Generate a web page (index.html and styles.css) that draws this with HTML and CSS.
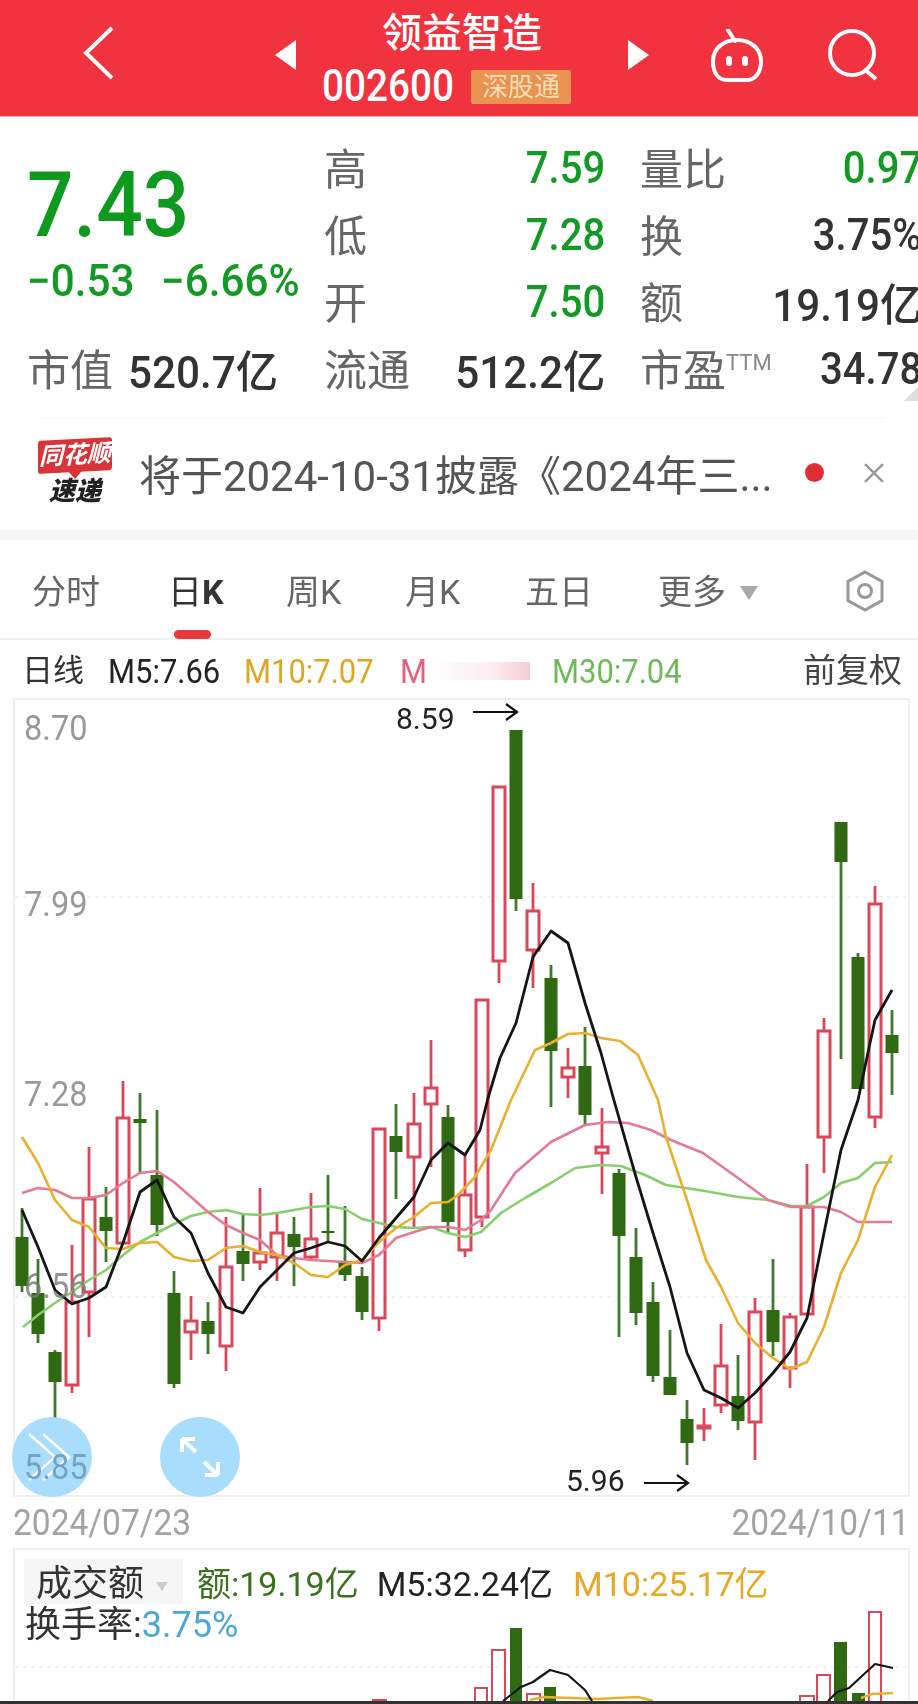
FILE: index.html
```html
<!DOCTYPE html>
<html lang="zh-CN">
<head>
    <meta charset="UTF-8">
    <meta name="viewport" content="width=device-width, initial-scale=1.0">
    <title>领益智造 002600</title>
    <link rel="stylesheet" href="styles.css">
</head>
<body>
    <div class="page">
        <header class="top-bar">
            <svg class="back" width="32" height="54" viewBox="0 0 32 54"><path d="M29 2 L3 27 L29 52" fill="none" stroke="#fff" stroke-width="4"/></svg>
            <svg class="tri-left" width="21" height="30" viewBox="0 0 21 30"><path d="M21 0 V30 L0 15 Z" fill="#fff"/></svg>
            <div class="stock-name">
                <div class="stock-title">领益智造</div>
                <div class="stock-code">
                    <span class="code-num">002600</span>
                    <span class="badge">深股通</span>
                </div>
            </div>
            <svg class="tri-right" width="21" height="30" viewBox="0 0 21 30"><path d="M0 0 V30 L21 15 Z" fill="#fff"/></svg>
            <svg class="robot" width="54" height="54" viewBox="0 0 54 54">
                <path d="M18 1 L25 12" fill="none" stroke="#fff" stroke-width="4" stroke-linecap="round"/>
                <path d="M27 11 C40 11 51 19 51 32 C51 45 44 51 37 51 H17 C9 51 3 45 3 32 C3 19 14 11 27 11 Z" fill="none" stroke="#fff" stroke-width="4"/>
                <rect x="16" y="27" width="6" height="10" rx="3" fill="#fff"/>
                <rect x="32" y="27" width="6" height="10" rx="3" fill="#fff"/>
            </svg>
            <svg class="search" width="52" height="52" viewBox="0 0 52 52">
                <circle cx="25" cy="24" r="22" fill="none" stroke="#fff" stroke-width="4"/>
                <path d="M37 40 L49 50" fill="none" stroke="#fff" stroke-width="4"/>
            </svg>
        </header>

        <section class="quote">
            <div class="price-block">
                <div class="price">7.43</div>
                <div class="change"><span>−0.53</span><span>−6.66%</span></div>
            </div>
            <div class="stat col-mid"><span class="stat-label">高</span><span class="num fall">7.59</span></div>
            <div class="stat"><span class="stat-label">量比</span><span class="num fall">0.97</span></div>
            <div class="stat col-mid"><span class="stat-label">低</span><span class="num fall">7.28</span></div>
            <div class="stat"><span class="stat-label">换</span><span class="num">3.75%</span></div>
            <div class="stat col-mid"><span class="stat-label">开</span><span class="num fall">7.50</span></div>
            <div class="stat"><span class="stat-label">额</span><span class="num num-wide">19.19亿</span></div>
            <div class="stat stat-cap"><span class="stat-label">市值</span><span class="num num-wide">520.7亿</span></div>
            <div class="stat col-mid"><span class="stat-label">流通</span><span class="num num-wide">512.2亿</span></div>
            <div class="stat"><span class="stat-label">市盈<sup class="ttm">TTM</sup></span><span class="num">34.78</span></div>
            <div class="corner"></div>
        </section>

        <div class="notice-wrap">
            <div class="notice">
                <div class="notice-logo">
                    <div class="logo-top">同花顺</div>
                    <div class="logo-bottom">速递</div>
                </div>
                <div class="notice-text">将于2024-10-31披露《2024年三...</div>
                <div class="notice-dot"></div>
                <svg class="notice-close" width="22" height="22" viewBox="0 0 22 22"><path d="M2 2 L20 20 M20 2 L2 20" stroke="#999" stroke-width="2.5"/></svg>
            </div>
        </div>

        <div class="band"></div>

        <nav class="tabs">
            <span class="tab tab-1">分时</span>
            <span class="tab tab-2 active">日<b>K</b></span>
            <span class="tab tab-3">周K</span>
            <span class="tab tab-4">月K</span>
            <span class="tab tab-5">五日</span>
            <span class="tab tab-6">更多<i class="more-tri"></i></span>
            <svg class="hex" width="42" height="42" viewBox="0 0 42 42">
                <path d="M21 2 L38 11.5 V30.5 L21 40 L4 30.5 V11.5 Z" fill="none" stroke="#999" stroke-width="3"/>
                <circle cx="21" cy="21" r="6.5" fill="none" stroke="#999" stroke-width="3"/>
            </svg>
        </nav>

        <div class="legend">
            <span class="legend-name">日线</span>
            <span class="ma l-m5">M5:7.66</span>
            <span class="ma l-m10">M10:7.07</span>
            <span class="ma l-m20">M</span>
            <span class="smudge"></span>
            <span class="ma l-m30">M30:7.04</span>
            <span class="legend-right">前复权</span>
        </div>

        <section class="chart-box">
            <canvas id="klineCanvas" width="893" height="795"></canvas>
            <span class="axis-label y1">8.70</span>
            <span class="axis-label y2">7.99</span>
            <span class="axis-label y3">7.28</span>
            <span class="axis-label y4">6.56</span>
            <div class="round-btn btn-a">
                <svg width="50" height="50" viewBox="0 0 50 50"><path d="M2 2 L28 25 L2 48 M16 2 L42 25 L16 48" fill="none" stroke="#fff" stroke-width="2.5"/></svg>
            </div>
            <div class="round-btn btn-b">
                <svg width="46" height="46" viewBox="0 0 46 46"><path d="M5 5 L19 18 M5 5 H18 M5 5 V18 M41 41 L27 28 M41 41 H28 M41 41 V28" fill="none" stroke="#fff" stroke-width="4"/></svg>
            </div>
            <span class="axis-label y5">5.85</span>
            <span class="mark mark-high">8.59</span>
            <svg class="mark-arrow arrow-high" width="46" height="18" viewBox="0 0 46 18"><path d="M0 9 H44 M33 1 L44 9 L33 17" fill="none" stroke="#111" stroke-width="2.2"/></svg>
            <span class="mark mark-low">5.96</span>
            <svg class="mark-arrow arrow-low" width="46" height="18" viewBox="0 0 46 18"><path d="M0 9 H44 M33 1 L44 9 L33 17" fill="none" stroke="#111" stroke-width="2.2"/></svg>
        </section>

        <div class="dates"><span class="date-from">2024/07/23</span><span class="date-to">2024/10/11</span></div>

        <section class="volume-box">
            <canvas id="volumeCanvas" width="893" height="151"></canvas>
            <div class="vol-head">
                <div class="vol-select">成交额<i class="select-tri"></i></div>
                <span class="v-amount">额:19.19亿</span>
                <span class="v-m5">M5:32.24亿</span>
                <span class="v-m10">M10:25.17亿</span>
            </div>
            <div class="vol-rate">换手率:<span>3.75%</span></div>
        </section>

        <div class="bottom-strip"></div>
    </div>

    <script src="chart.js"></script>
</body>
</html>
```

FILE: styles.css
```css
* {
    margin: 0;
    padding: 0;
    box-sizing: border-box;
}

html, body {
    width: 918px;
    height: 1704px;
    overflow: hidden;
    background: #fff;
}

.page {
    width: 918px;
    height: 1704px;
    overflow: hidden;
    font-family: Roboto, 'Noto Sans CJK SC', sans-serif;
    color: #333;
    filter: blur(0.6px);
}

/* top bar */
.top-bar {
    height: 117px;
    background: #f1323f;
    display: flex;
    align-items: flex-start;
    color: #fff;
    border-bottom: 1px solid #e8b0b0;
}

.back {
    margin: 26px 0 0 83px;
}

.tri-left {
    margin: 40px 0 0 160px;
}

.tri-right {
    margin: 40px 0 0 0;
}

.robot {
    margin: 29px 0 0 61px;
}

.search {
    margin: 29px 0 0 63px;
}

.stock-name {
    width: 332px;
    padding-left: 26px;
}

.stock-title {
    width: 280px;
    padding-top: 9px;
    height: 64px;
    font-size: 40px;
    font-weight: 500;
    line-height: 50px;
    text-align: center;
}

.stock-code {
    position: relative;
    height: 40px;
}

.code-num {
    display: inline-block;
    font-size: 44px;
    font-weight: 500;
    line-height: 44px;
    transform: scaleX(0.88);
    transform-origin: left center;
}

.badge {
    position: absolute;
    left: 149px;
    top: 6px;
    width: 100px;
    height: 34px;
    line-height: 34px;
    background: #e8934f;
    color: #f8dcb8;
    font-size: 26px;
    text-align: center;
    border-radius: 2px;
}

/* quote */
.quote {
    position: relative;
    width: 925px;
    padding: 15px 0 0 27px;
    display: grid;
    grid-template-columns: 297px 316px 282px;
    grid-template-rows: repeat(4, 67px);
    font-size: 44px;
    font-weight: 500;
    color: #333;
}

.price-block {
    grid-row: 1 / span 3;
}

.price {
    font-size: 91px;
    line-height: 100px;
    margin-top: 23px;
    color: #0e9a1e;
    font-weight: 500;
    transform: scaleX(0.9);
    transform-origin: left center;
}

.change {
    display: flex;
    gap: 22px;
    margin-top: 3px;
    font-size: 44px;
    line-height: 46px;
    color: #139a25;
    font-weight: 500;
}

.change span {
    display: inline-block;
    transform: scaleX(0.96);
    transform-origin: left center;
}

.stat {
    display: flex;
    justify-content: space-between;
    align-items: center;
}

.col-mid {
    padding-right: 35px;
}

.stat-cap {
    justify-content: flex-start;
    gap: 15px;
}

.num {
    display: inline-block;
    transform: translateY(2px) scaleX(0.91);
    transform-origin: right center;
    white-space: nowrap;
}

.num-wide {
    transform: translateY(2px) scaleX(0.96);
}

.stat-cap .num {
    transform-origin: left center;
}

.stat-label {
    font-size: 43px;
    font-weight: 400;
    color: #666;
}

.fall {
    color: #139a25;
}

.ttm {
    font-size: 22px;
    color: #888;
    vertical-align: 16px;
    line-height: 0;
}

.corner {
    position: absolute;
    right: 7px;
    bottom: -1px;
    width: 0;
    height: 0;
    border-left: 14px solid transparent;
    border-bottom: 14px solid #ddd;
}

/* notice */
.notice-wrap {
    height: 130px;
    padding: 17px 33px 0 40px;
}

.notice {
    border-top: 1px solid #f2f2f2;
    height: 110px;
    display: flex;
    align-items: center;
}

.notice-logo {
    width: 74px;
    margin-left: -2px;
    text-align: center;
}

.logo-top {
    height: 33px;
    line-height: 32px;
    background: #d9333a;
    color: #fff;
    font-size: 24px;
    font-style: italic;
    font-weight: 700;
    border-radius: 3px;
    transform: skewY(-3deg);
    position: relative;
}

.logo-top::after {
    content: "";
    position: absolute;
    left: 30px;
    bottom: -7px;
    border-left: 7px solid transparent;
    border-right: 7px solid transparent;
    border-top: 8px solid #d9333a;
}

.logo-bottom {
    font-size: 26px;
    line-height: 30px;
    margin-top: 4px;
    font-style: italic;
    font-weight: 900;
    color: #222;
}

.notice-text {
    width: 650px;
    margin-left: 27px;
    font-size: 42px;
    color: #555;
    white-space: nowrap;
}

.notice-dot {
    width: 19px;
    height: 19px;
    border-radius: 50%;
    background: #e22d35;
    margin-left: 17px;
}

.notice-close {
    margin-left: 39px;
}

.band {
    height: 10px;
    background: #f6f6f6;
}

/* tabs */
.tabs {
    position: relative;
    height: 100px;
    display: flex;
    align-items: center;
    font-size: 34px;
    color: #666;
    border-bottom: 2px solid #f1f1f1;
}

.tab {
    position: absolute;
    white-space: nowrap;
}

.tab-1 { left: 32px; }
.tab-2 { left: 168px; color: #333; }
.tab-3 { left: 286px; }
.tab-4 { left: 405px; }
.tab-5 { left: 525px; }
.tab-6 { left: 658px; }

.active b {
    font-weight: 700;
}

.active::after {
    content: "";
    position: absolute;
    left: 6px;
    top: 65px;
    width: 37px;
    height: 9px;
    border-radius: 5px;
    background: #e8383b;
}

.more-tri {
    display: inline-block;
    margin-left: 14px;
    vertical-align: 4px;
    border-left: 9px solid transparent;
    border-right: 9px solid transparent;
    border-top: 14px solid #aaa;
}

.hex {
    position: absolute;
    left: 844px;
    top: 30px;
}

/* legend */
.legend {
    position: relative;
    height: 58px;
    font-size: 34px;
    line-height: 62px;
    white-space: nowrap;
}

.legend span {
    position: absolute;
    top: 0;
}

.ma {
    transform: scaleX(0.91);
    transform-origin: left center;
}

.legend-name { left: 22px; font-size: 31px; }
.l-m5 { left: 108px; color: #222; }
.l-m10 { left: 244px; color: #dfa624; }
.l-m20 { left: 400px; color: #e8607f; }
.l-m30 { left: 552px; color: #6dbb58; }
.legend-right { left: 803px; font-size: 33px; color: #444; }

.legend .smudge {
    left: 427px;
    top: 22px;
    width: 103px;
    height: 18px;
    background: linear-gradient(90deg, #fff, #fcecef 65%, #f6ccd6);
}

/* kline chart */
.chart-box {
    position: relative;
    width: 897px;
    height: 799px;
    margin-left: 13px;
    border: 2px solid #f0f0f0;
}

canvas {
    display: block;
}

.axis-label {
    position: absolute;
    left: 9px;
    font-size: 35px;
    line-height: 36px;
    color: #999;
    transform: scaleX(0.93);
    transform-origin: left center;
}

.y1 { top: 11px; }
.y2 { top: 187px; }
.y3 { top: 377px; }
.y4 { top: 569px; color: rgba(120, 120, 120, 0.8); }
.y5 { top: 750px; color: #74a4c4; }

.round-btn {
    position: absolute;
    top: 717px;
    width: 80px;
    height: 80px;
    border-radius: 50%;
    background: #a8ddfb;
    display: flex;
    align-items: center;
    justify-content: center;
}

.btn-a { left: -3px; }
.btn-b { left: 145px; }

.mark {
    position: absolute;
    font-size: 30px;
    line-height: 32px;
    color: #222;
}

.mark-high { left: 381px; top: 3px; }
.mark-low { left: 551px; top: 765px; }

.mark-arrow {
    position: absolute;
}

.arrow-high { left: 458px; top: 3px; }
.arrow-low { left: 629px; top: 774px; }

.dates {
    display: flex;
    justify-content: space-between;
    height: 51px;
    padding: 6px 8px 0 13px;
    font-size: 36px;
    line-height: 40px;
    color: #a3a3a3;
}

.dates span {
    display: inline-block;
    transform: scaleX(0.93);
}

.date-from {
    transform-origin: left center;
}

.date-to {
    transform-origin: right center;
}

/* volume chart */
.volume-box {
    position: relative;
    width: 897px;
    height: 153px;
    margin-left: 13px;
    border: 2px solid #f0f0f0;
    border-bottom: 0;
}

#volumeCanvas {
    position: absolute;
    left: 0;
    top: 0;
}

.vol-head {
    position: relative;
    display: flex;
    align-items: center;
    padding: 9px 0 0 9px;
    font-size: 34px;
    height: 54px;
    white-space: nowrap;
}

.vol-select {
    width: 159px;
    height: 45px;
    line-height: 50px;
    padding-left: 12px;
    background: #f6f6f6;
    font-size: 36px;
    color: #333;
}

.select-tri {
    display: inline-block;
    margin-left: 12px;
    vertical-align: 5px;
    border-left: 6px solid transparent;
    border-right: 6px solid transparent;
    border-top: 9px solid #ccc;
}

.v-amount { margin-left: 14px; color: #3b701f; }
.v-m5 { margin-left: 18px; color: #222; }
.v-m10 { margin-left: 20px; color: #e6a825; }

.vol-rate {
    position: relative;
    margin: 0 0 0 10px;
    font-size: 36px;
    line-height: 42px;
    color: #333;
}

.vol-rate span {
    color: #4aa8d8;
}

.bottom-strip {
    height: 3px;
    background: #333;
}
```

FILE: chart.js
```js
// K-line chart, coordinates are page pixels
const chartLeft = 15;
const chartTop = 700;

const upColor = '#d9485a';
const downColor = '#2f6a12';
const downWick = '#3f7a2c';

// x, high, low, bodyTop, bodyBottom, up
const candles = [
    [22, 1208, 1292, 1237, 1286, 0], [38, 1259, 1343, 1293, 1334, 0], [55, 1350, 1420, 1352, 1382, 0],
    [72, 1245, 1393, 1302, 1385, 1], [89, 1147, 1337, 1199, 1292, 1], [106, 1187, 1262, 1217, 1231, 0],
    [123, 1081, 1243, 1118, 1243, 1], [140, 1093, 1172, 1119, 1123, 0], [157, 1110, 1236, 1175, 1225, 0],
    [174, 1271, 1388, 1293, 1384, 0], [191, 1296, 1360, 1321, 1332, 1], [208, 1302, 1354, 1321, 1334, 0],
    [226, 1217, 1371, 1267, 1346, 1], [243, 1215, 1281, 1251, 1264, 0], [260, 1188, 1270, 1253, 1262, 1],
    [277, 1212, 1281, 1233, 1257, 1], [294, 1217, 1286, 1234, 1247, 0], [311, 1193, 1260, 1239, 1257, 1],
    [328, 1175, 1242, 1231, 1233, 0], [345, 1206, 1281, 1261, 1275, 0], [362, 1267, 1320, 1276, 1312, 0],
    [379, 1129, 1331, 1129, 1318, 1], [396, 1104, 1199, 1136, 1152, 0], [414, 1093, 1227, 1124, 1157, 1],
    [431, 1040, 1167, 1088, 1104, 1], [448, 1105, 1233, 1117, 1222, 0], [465, 1155, 1257, 1195, 1250, 1],
    [482, 1000, 1227, 1000, 1217, 1], [499, 787, 983, 787, 961, 1], [516, 730, 911, 730, 899, 0],
    [533, 883, 988, 911, 950, 1], [551, 965, 1107, 978, 1051, 0], [568, 1048, 1098, 1068, 1077, 1],
    [585, 1027, 1126, 1066, 1115, 0], [602, 1108, 1194, 1147, 1153, 1], [619, 1169, 1337, 1173, 1236, 0],
    [636, 1228, 1325, 1257, 1313, 0], [653, 1282, 1382, 1302, 1376, 0], [670, 1330, 1395, 1377, 1395, 0],
    [687, 1400, 1465, 1419, 1443, 0], [704, 1408, 1441, 1426, 1428, 1], [721, 1324, 1413, 1366, 1405, 1],
    [738, 1355, 1430, 1396, 1421, 0], [755, 1298, 1460, 1312, 1422, 1], [773, 1259, 1356, 1310, 1342, 0],
    [790, 1313, 1388, 1317, 1368, 1], [807, 1164, 1314, 1207, 1314, 1], [824, 1018, 1173, 1031, 1137, 1],
    [841, 822, 1059, 822, 862, 0], [858, 953, 1089, 957, 1089, 0], [875, 886, 1128, 904, 1117, 1],
    [892, 1010, 1095, 1035, 1053, 0]
];

const m30 = [[23,1327],[38,1315],[55,1303],[72,1292],[89,1280],[106,1270],[123,1255],[140,1242],[157,1233],[174,1224],[191,1216],[208,1212],[226,1210],[243,1214],[260,1215],[277,1213],[294,1210],[311,1207],[328,1206],[345,1209],[362,1219],[379,1223],[396,1227],[414,1228],[431,1227],[448,1233],[465,1237],[481,1232],[501,1213],[525,1198],[551,1183],[575,1168],[601,1165],[621,1166],[645,1175],[666,1185],[705,1191],[738,1197],[768,1200],[791,1206],[807,1206],[824,1197],[841,1183],[858,1178],[875,1163],[892,1162]];

const m20 = [[22,1193],[38,1188],[55,1190],[72,1198],[89,1198],[106,1195],[123,1183],[140,1173],[157,1171],[174,1182],[191,1197],[208,1212],[226,1225],[243,1233],[260,1240],[277,1255],[294,1258],[311,1260],[328,1261],[345,1262],[362,1263],[379,1255],[396,1238],[414,1232],[431,1227],[448,1227],[465,1230],[481,1220],[491,1210],[515,1173],[551,1142],[585,1125],[608,1122],[628,1123],[651,1130],[671,1140],[703,1153],[738,1178],[768,1200],[791,1207],[807,1207],[824,1207],[841,1212],[858,1222],[892,1222]];

const m10 = [[22,1137],[38,1163],[55,1200],[72,1220],[89,1227],[106,1248],[123,1249],[140,1243],[157,1242],[174,1257],[191,1261],[208,1260],[226,1248],[243,1246],[260,1252],[277,1255],[294,1263],[311,1275],[328,1277],[345,1265],[362,1260],[379,1242],[396,1228],[414,1217],[431,1203],[448,1202],[458,1195],[475,1177],[491,1150],[511,1100],[535,1050],[551,1043],[568,1034],[585,1033],[601,1038],[620,1041],[638,1055],[658,1100],[666,1137],[687,1200],[706,1260],[721,1287],[738,1323],[755,1343],[773,1358],[790,1369],[807,1362],[824,1327],[841,1273],[858,1240],[875,1187],[892,1155]];

const m5 = [[22,1210],[38,1247],[55,1290],[72,1304],[89,1298],[106,1287],[123,1243],[140,1192],[157,1180],[174,1217],[191,1233],[208,1273],[226,1307],[243,1313],[260,1287],[277,1270],[294,1253],[311,1248],[328,1242],[345,1246],[362,1261],[379,1238],[396,1218],[414,1197],[431,1160],[448,1143],[465,1155],[480,1130],[488,1098],[500,1058],[516,1023],[533,957],[551,931],[568,943],[585,1003],[601,1053],[613,1097],[636,1177],[653,1233],[670,1287],[687,1353],[704,1390],[721,1398],[738,1408],[755,1393],[773,1373],[790,1352],[807,1318],[824,1233],[841,1150],[858,1100],[870,1043],[875,1020],[892,990]];

function drawLine(ctx, points, color, width) {
    ctx.beginPath();
    points.forEach((p, i) => {
        if (i === 0) ctx.moveTo(p[0], p[1]);
        else ctx.lineTo(p[0], p[1]);
    });
    ctx.strokeStyle = color;
    ctx.lineWidth = width;
    ctx.lineJoin = 'round';
    ctx.stroke();
}

function drawGrid(ctx, y, x1, x2) {
    ctx.strokeStyle = '#f0f0f0';
    ctx.lineWidth = 1.5;
    ctx.setLineDash([4, 4]);
    ctx.beginPath();
    ctx.moveTo(x1, y);
    ctx.lineTo(x2, y);
    ctx.stroke();
    ctx.setLineDash([]);
}

// Свечи
const kline = document.getElementById('klineCanvas').getContext('2d');
kline.translate(-chartLeft, -chartTop);

drawGrid(kline, 897, 15, 908);
drawGrid(kline, 1297, 15, 908);

candles.forEach(c => {
    const [x, high, low, top, bottom, up] = c;
    kline.strokeStyle = up ? upColor : downWick;
    kline.lineWidth = 2.8;
    kline.beginPath();
    kline.moveTo(x, high);
    kline.lineTo(x, up ? top : low);
    if (up) {
        kline.moveTo(x, bottom);
        kline.lineTo(x, low);
    }
    kline.stroke();

    if (up) {
        kline.strokeStyle = upColor;
        kline.lineWidth = 3;
        kline.strokeRect(x - 6, top, 12, Math.max(bottom - top, 2));
    } else {
        kline.fillStyle = downColor;
        kline.fillRect(x - 6.5, top, 13, bottom - top);
    }
});

drawLine(kline, m30, '#86cf6e', 2.6);
drawLine(kline, m20, '#e57a95', 2.6);
drawLine(kline, m10, '#e8b02e', 2.6);
drawLine(kline, m5, '#151515', 2.8);

// Объём
const volume = document.getElementById('volumeCanvas').getContext('2d');
volume.translate(-chartLeft, -1550);

drawGrid(volume, 1667, 15, 908);

const bars = [
    [373, 13, 1700, 1], [475, 12, 1688, 1], [492, 13, 1650, 1], [510, 12, 1628, 0],
    [527, 13, 1694, 1], [544, 12, 1687, 0], [800, 14, 1696, 1], [817, 13, 1675, 1],
    [834, 13, 1642, 0], [852, 13, 1693, 0], [869, 12, 1612, 1]
];

bars.forEach(b => {
    const [x, w, top, up] = b;
    if (up) {
        volume.strokeStyle = upColor;
        volume.lineWidth = 2;
        volume.strokeRect(x, top, w, 1710 - top);
    } else {
        volume.fillStyle = downColor;
        volume.fillRect(x, top, w, 1710 - top);
    }
});

drawLine(volume, [[530,1700],[544,1697],[597,1699],[638,1697],[653,1701]], '#e8b02e', 2.4);
drawLine(volume, [[861,1698],[872,1694],[893,1693]], '#e8b02e', 2.4);
drawLine(volume, [[503,1701],[521,1687],[533,1682],[550,1670],[568,1675],[585,1690],[592,1701]], '#151515', 2.2);
drawLine(volume, [[828,1701],[837,1692],[849,1688],[875,1664],[893,1668]], '#151515', 2.2);
```
